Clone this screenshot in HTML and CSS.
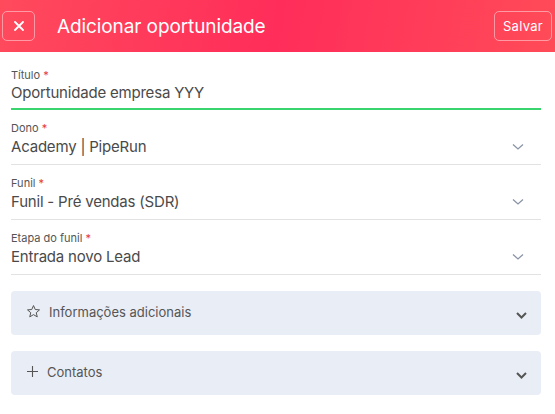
FILE: index.html
```html
<!DOCTYPE html>
<html lang="pt">
<head>
<meta charset="utf-8">
<link rel="stylesheet" href="styles.css">
</head>
<body>
<header class="topbar">
  <button class="icon-btn" aria-label="Fechar">
    <svg width="12" height="12" viewBox="0 0 12 12"><path d="M2 2 L10 10 M10 2 L2 10" stroke="#fff" stroke-width="1.8" stroke-linecap="round"/></svg>
  </button>
  <h1 class="title">Adicionar oportunidade</h1>
  <button class="save-btn">Salvar</button>
</header>
<main class="form">
  <div class="field field-active">
    <label class="label">Título <span class="req">*</span></label>
    <div class="value">Oportunidade empresa YYY</div>
  </div>
  <div class="field">
    <label class="label">Dono <span class="req">*</span></label>
    <div class="row"><div class="value">Academy | PipeRun</div>
      <svg class="chev" width="12" height="8" viewBox="0 0 12 8"><path d="M1 1.5 L6 6 L11 1.5" fill="none" stroke="#8a94a6" stroke-width="1.3"/></svg></div>
  </div>
  <div class="field">
    <label class="label">Funil <span class="req">*</span></label>
    <div class="row"><div class="value">Funil - Pré vendas (SDR)</div>
      <svg class="chev" width="12" height="8" viewBox="0 0 12 8"><path d="M1 1.5 L6 6 L11 1.5" fill="none" stroke="#8a94a6" stroke-width="1.3"/></svg></div>
  </div>
  <div class="field">
    <label class="label">Etapa do funil <span class="req">*</span></label>
    <div class="row"><div class="value">Entrada novo Lead</div>
      <svg class="chev" width="12" height="8" viewBox="0 0 12 8"><path d="M1 1.5 L6 6 L11 1.5" fill="none" stroke="#8a94a6" stroke-width="1.3"/></svg></div>
  </div>
  <div class="panel">
    <svg class="panel-icon" width="15" height="15" viewBox="0 0 24 24"><path d="M12 2.5 L14.8 8.8 L21.6 9.4 L16.4 13.9 L18 20.6 L12 17 L6 20.6 L7.6 13.9 L2.4 9.4 L9.2 8.8 Z" fill="none" stroke="#555" stroke-width="1.6" stroke-linejoin="round"/></svg>
    <span class="panel-text">Informações adicionais</span>
    <svg class="panel-chev" width="11" height="7" viewBox="0 0 11 7"><path d="M1 1 L5.5 5.5 L10 1" fill="none" stroke="#555" stroke-width="2"/></svg>
  </div>
  <div class="panel">
    <svg class="panel-icon" width="13" height="13" viewBox="0 0 13 13"><path d="M6.5 1 V12 M1 6.5 H12" stroke="#555" stroke-width="1.1"/></svg>
    <span class="panel-text">Contatos</span>
    <svg class="panel-chev" width="11" height="7" viewBox="0 0 11 7"><path d="M1 1 L5.5 5.5 L10 1" fill="none" stroke="#555" stroke-width="2"/></svg>
  </div>
</main>
</body>
</html>
```
FILE: styles.css
```css
* { box-sizing: border-box; }
html, body { margin: 0; padding: 0; background: #fff; }
body { font-family: "Inter", "Noto Sans", sans-serif; width: 555px; height: 414px; overflow: hidden; }

.topbar {
  height: 52px;
  display: flex;
  align-items: center;
  padding: 0 3px 0 2px;
  background: linear-gradient(100deg, #ff4a5c 0%, #ff2d5a 50%, #ff4b58 100%);
}
.icon-btn {
  width: 33px; height: 30px;
  border: 1px solid rgba(255,255,255,0.45);
  border-radius: 5px;
  background: transparent;
  display: flex; align-items: center; justify-content: center;
  padding: 0;
}
.title {
  margin: 0 0 0 22px;
  color: #fff;
  font-size: 19px;
  font-weight: 400;
  flex: 1;
  letter-spacing: -0.1px;
}
.save-btn {
  height: 30px;
  padding: 0 8px;
  border: 1px solid rgba(255,255,255,0.45);
  border-radius: 5px;
  background: transparent;
  color: #fff;
  font-family: inherit;
  font-size: 13px;
  letter-spacing: 0.3px;
}

.form { padding: 5px 14px 0 11px; }
.field {
  border-bottom: 1px solid #e2e2e2;
  padding: 11px 0 6px;
  height: 55px;
}
.field-active { border-bottom: 2px solid #3ad46e; height: 53px; padding: 11px 0 0; }
.field-active .value { margin-top: 0; }
.label { display: block; font-size: 11px; color: #555; line-height: 14px; }
.req { color: #e53935; }
.row { display: flex; align-items: center; justify-content: space-between; }
.value { font-size: 15px; letter-spacing: -0.2px; color: #4a4a4a; line-height: 22px; margin-top: 1px; }
.chev { margin-right: 17px; margin-top: 1px; }

.panel {
  height: 44px;
  background: #e9edf5;
  border-radius: 4px;
  display: flex;
  align-items: center;
  padding: 0 14px 0 15px;
  margin-top: 16px;
}
.panel-icon { margin-right: 8px; margin-top: -3px; }
.panel-text { flex: 1; font-size: 13px; color: #555; margin-top: -3px; }
.panel-chev { margin-top: 5px; }
```
